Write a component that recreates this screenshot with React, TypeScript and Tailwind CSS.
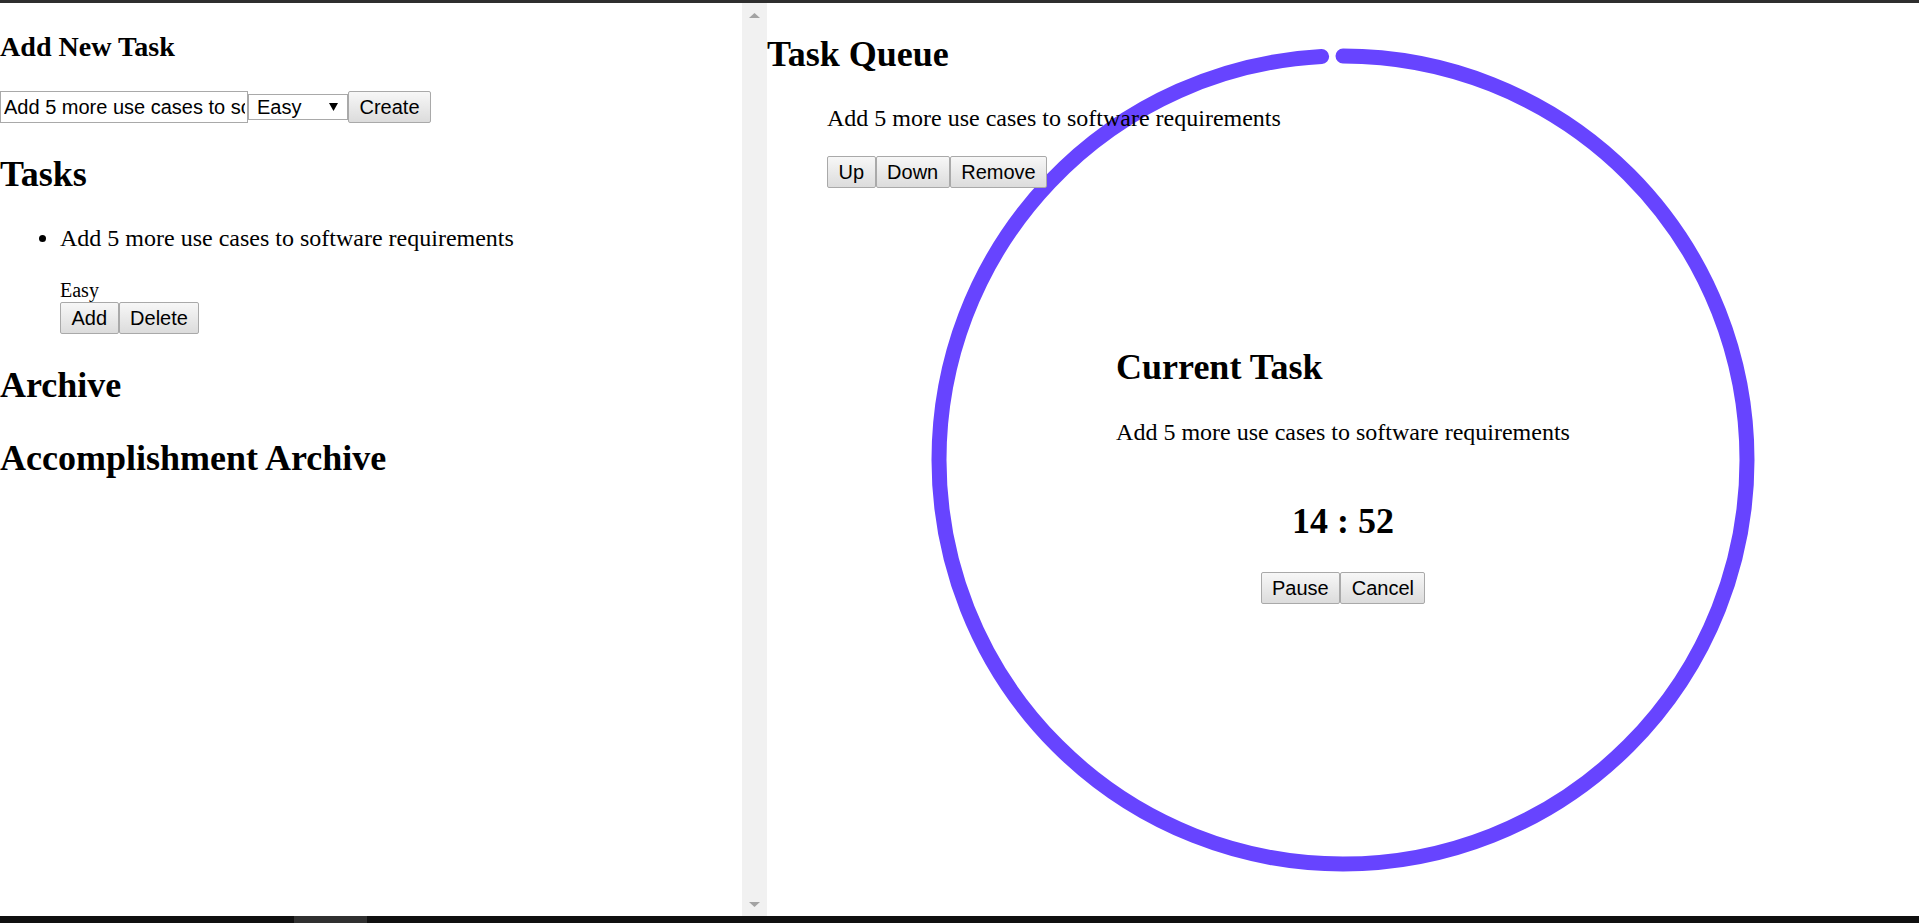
import type { ReactNode } from 'react'

const TOTAL = 900
const LEFT = 892
const R = 404
const C = 2 * Math.PI * R

function Btn({ children }: { children: ReactNode }) {
    return (
        <button className="h-[32px] px-[10.5px] border border-[#a9a9a9] rounded-[2px] bg-linear-to-b from-[#f7f7f7] to-[#dcdcdc] font-['Liberation_Sans',Arial,sans-serif] text-[20px] leading-[23px] text-black">
            {children}
        </button>
    )
}

function TimerRing() {
    const visible = (LEFT / TOTAL) * C
    return (
        <div className="absolute left-1/2 top-[42px] -translate-x-1/2 w-[830px] h-[830px]">
            <svg className="absolute inset-0" width="830" height="830" viewBox="0 0 830 830">
                <circle
                    cx="415"
                    cy="415"
                    r={R}
                    fill="none"
                    stroke="#6744ff"
                    strokeWidth="15"
                    strokeLinecap="round"
                    strokeDasharray={`${visible} ${C}`}
                    transform="rotate(-90 415 415)"
                />
            </svg>
            <div className="relative flex flex-col items-center pt-[301px]">
                <div className="w-fit">
                    <h2 className="text-[36px] font-bold">Current Task</h2>
                    <p className="mt-[31px] text-[24px]">Add 5 more use cases to software requirements</p>
                    <h2 className="mt-[54px] text-[36px] font-bold text-center">14 : 52</h2>
                    <div className="mt-[30px] flex justify-center">
                        <Btn>Pause</Btn>
                        <Btn>Cancel</Btn>
                    </div>
                </div>
            </div>
        </div>
    )
}

export default function App() {
    return (
        <div className="h-[923px] w-full flex flex-col bg-[#101010] overflow-hidden leading-[normal] text-black font-['Liberation_Serif','Times_New_Roman',serif]">
            <div className="h-[3px] bg-[#2e2e2e]" />
            <div className="flex h-[913px] bg-white">
                {/* Left pane */}
                <div className="w-[742px] pt-[28px]">
                    <h3 className="text-[28.08px] font-bold">Add New Task</h3>
                    <div className="mt-[28px] flex items-center">
                        <input
                            readOnly
                            defaultValue="Add 5 more use cases to software requirements"
                            className="w-[248px] h-[32px] pl-[3px] pr-[2px] border border-[#a9a9a9] font-['Liberation_Sans',Arial,sans-serif] text-[20px] outline-none"
                        />
                        <div className="w-[100px] h-[26px] flex items-center justify-between pl-[8px] pr-[9px] border border-[#a9a9a9] font-['Liberation_Sans',Arial,sans-serif] text-[20px]">
                            <span>Easy</span>
                            <svg width="9" height="8" viewBox="0 0 9 8">
                                <polygon points="0,0 9,0 4.5,8" fill="#000" />
                            </svg>
                        </div>
                        <Btn>Create</Btn>
                    </div>

                    <h2 className="mt-[30px] text-[36px] font-bold">Tasks</h2>
                    <ul className="mt-[30px] list-disc pl-[60px] text-[24px]">
                        <li>
                            Add 5 more use cases to software requirements
                            <div className="mt-[27px] text-[20px]">Easy</div>
                            <div className="flex">
                                <Btn>Add</Btn>
                                <Btn>Delete</Btn>
                            </div>
                        </li>
                    </ul>

                    <h2 className="mt-[30px] text-[36px] font-bold">Archive</h2>
                    <h2 className="mt-[31px] text-[36px] font-bold">Accomplishment Archive</h2>
                </div>

                {/* Scrollbar */}
                <div className="w-[25px] bg-[#f1f1f1] flex flex-col items-center justify-between pt-[10px] pb-[9px]">
                    <svg width="11" height="5" viewBox="0 0 11 5">
                        <polygon points="0,5 11,5 5.5,0" fill="#a3a3a3" />
                    </svg>
                    <svg width="11" height="5" viewBox="0 0 11 5">
                        <polygon points="0,0 11,0 5.5,5" fill="#a3a3a3" />
                    </svg>
                </div>

                {/* Right pane */}
                <div className="relative flex-1">
                    <TimerRing />
                    <div className="relative pt-[30px]">
                        <h2 className="text-[36px] font-bold">Task Queue</h2>
                        <div className="mt-[30px] pl-[60px]">
                            <p className="text-[24px]">Add 5 more use cases to software requirements</p>
                            <div className="mt-[24px] flex">
                                <Btn>Up</Btn>
                                <Btn>Down</Btn>
                                <Btn>Remove</Btn>
                            </div>
                        </div>
                    </div>
                </div>
            </div>
            <div className="h-[7px] flex">
                <div className="ml-[294px] w-[73px] bg-[#303030]" />
            </div>
        </div>
    )
}
